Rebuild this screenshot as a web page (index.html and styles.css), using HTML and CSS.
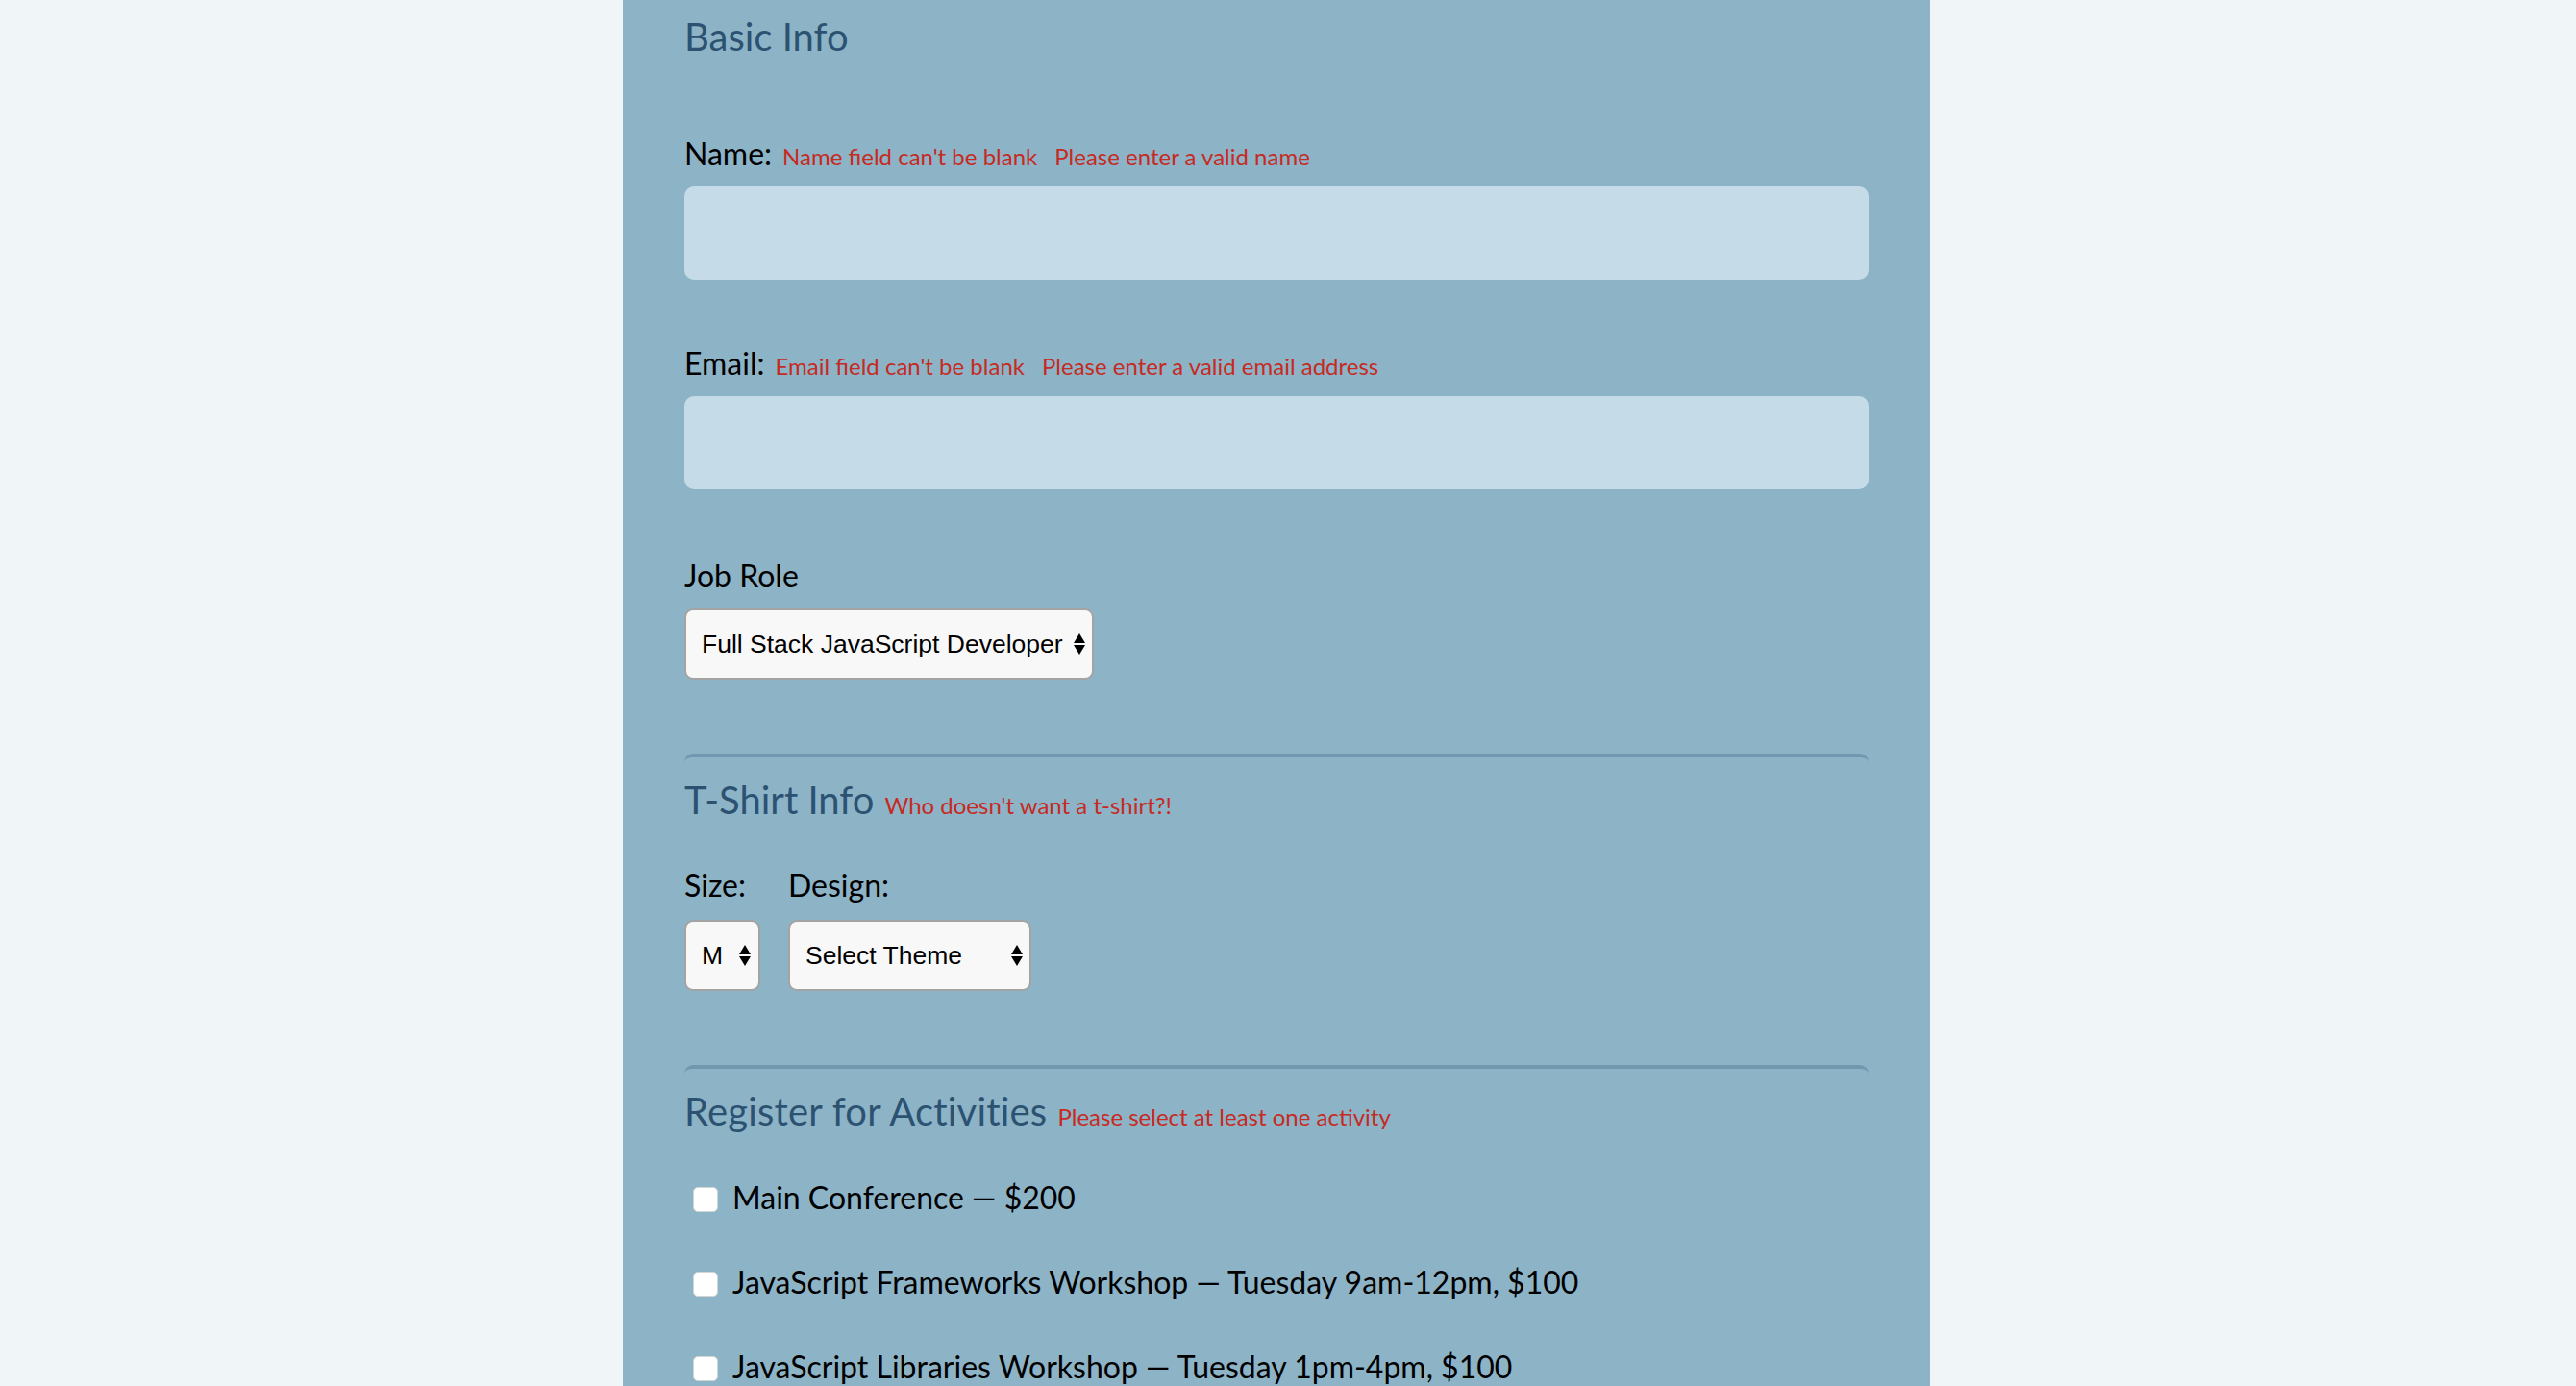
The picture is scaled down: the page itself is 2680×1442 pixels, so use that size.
FILE: index.html
```html
<!DOCTYPE html>
<html lang="en">
<head>
<meta charset="utf-8">
<title>Conference Registration</title>
<link rel="stylesheet" href="styles.css">
</head>
<body>
<form class="panel">
  <section class="group first">
    <h2 class="legend">Basic Info</h2>

    <div class="label-row name-row">
      <label for="name">Name:</label>
      <span class="err">Name field can't be blank</span>
      <span class="err err-gap">Please enter a valid name</span>
    </div>
    <input class="text-input" id="name" type="text">

    <div class="label-row">
      <label for="mail">Email:</label>
      <span class="err">Email field can't be blank</span>
      <span class="err err-gap">Please enter a valid email address</span>
    </div>
    <input class="text-input" id="mail" type="email">

    <div class="label-row job-row">
      <label for="title">Job Role</label>
    </div>
    <div class="select-wrap job-select">
      <select id="title" class="select">
        <option>Full Stack JavaScript Developer</option>
      </select>
      <svg class="arrows" width="12" height="22" viewBox="0 0 12 22"><path d="M6 0 L12 10 L0 10 Z M0 12 L12 12 L6 22 Z" fill="#000"/></svg>
    </div>
  </section>

  <section class="group ruled">
    <div class="legend-row">
      <h2 class="legend">T-Shirt Info</h2>
      <span class="err">Who doesn't want a t-shirt?!</span>
    </div>
    <div class="shirt-row">
      <div class="shirt-col">
        <div class="label-row"><label for="size">Size:</label></div>
        <div class="select-wrap size-select">
          <select id="size" class="select"><option>M</option></select>
          <svg class="arrows" width="12" height="22" viewBox="0 0 12 22"><path d="M6 0 L12 10 L0 10 Z M0 12 L12 12 L6 22 Z" fill="#000"/></svg>
        </div>
      </div>
      <div class="shirt-col">
        <div class="label-row"><label for="design">Design:</label></div>
        <div class="select-wrap design-select">
          <select id="design" class="select"><option>Select Theme</option></select>
          <svg class="arrows" width="12" height="22" viewBox="0 0 12 22"><path d="M6 0 L12 10 L0 10 Z M0 12 L12 12 L6 22 Z" fill="#000"/></svg>
        </div>
      </div>
    </div>
  </section>

  <section class="group ruled">
    <div class="legend-row">
      <h2 class="legend wide">Register for Activities</h2>
      <span class="err">Please select at least one activity</span>
    </div>
    <div class="activities">
      <label class="activity"><input type="checkbox" class="check"><span>Main Conference — $200</span></label>
      <label class="activity"><input type="checkbox" class="check"><span>JavaScript Frameworks Workshop — Tuesday 9am-12pm, $100</span></label>
      <label class="activity"><input type="checkbox" class="check"><span>JavaScript Libraries Workshop — Tuesday 1pm-4pm, $100</span></label>
    </div>
  </section>
</form>
</body>
</html>
```

FILE: styles.css
```css
html, body {
  margin: 0;
  padding: 0;
}

body {
  background: #f0f5f8;
  font-family: "Lato", "Open Sans", sans-serif;
  color: #000;
  height: 1442px;
  overflow: hidden;
}

.panel {
  width: 1360px;
  box-sizing: border-box;
  margin-left: 648px;
  background: #8db3c7;
  padding: 14px 64px 0;
  min-height: 1442px;
}

.group {
  margin: 0;
  padding: 0;
}

.ruled {
  margin-top: 77px;
  border-top: 4px solid #7198af;
  border-radius: 9px;
  padding-top: 20px;
}

.legend {
  margin: 0;
  font-size: 40px;
  font-weight: 400;
  line-height: 48px;
  color: #2c5272;
}

.legend.wide {
  letter-spacing: 0.2px;
}

.legend-row {
  display: flex;
  align-items: baseline;
  gap: 11px;
}

.err {
  font-size: 24px;
  color: #c62a22;
  line-height: 30px;
}

.err-gap {
  margin-left: 7px;
}

.label-row {
  display: flex;
  align-items: baseline;
  gap: 11px;
  font-size: 32px;
  line-height: 38px;
}

.label-row label {
  font-size: 32px;
}

.name-row {
  margin-top: 79px;
}

.job-row {
  position: relative;
  top: 3px;
}

.text-input {
  display: block;
  box-sizing: border-box;
  width: 100%;
  height: 97px;
  margin: 15px 0 68px;
  background: #c5dce8;
  border: 0;
  border-radius: 10px;
  outline: none;
}

.select-wrap {
  position: relative;
  margin-top: 18px;
}

.select {
  -webkit-appearance: none;
  appearance: none;
  display: block;
  box-sizing: border-box;
  height: 74px;
  background: #f8f8f8;
  border: 2px solid #a3a3a3;
  border-radius: 9px;
  font-family: "Liberation Sans", Arial, sans-serif;
  font-size: 26.5px;
  color: #000;
  padding: 0 30px 0 16px;
  margin: 0;
}

.arrows {
  position: absolute;
  top: 26px;
}

.job-select .select { width: 426px; }
.job-select .arrows { left: 405px; }

.shirt-row {
  display: flex;
  gap: 29px;
  margin-top: 46px;
}

.shirt-col .select-wrap {
  margin-top: 17px;
}

.size-select .select { width: 79px; }
.size-select .arrows { left: 57px; }

.design-select .select { width: 253px; }
.design-select .arrows { left: 232px; }

.activities {
  margin-top: 47px;
  display: flex;
  flex-direction: column;
  gap: 50px;
}

.activity {
  display: flex;
  align-items: center;
  font-size: 32px;
  line-height: 38px;
}

.check {
  -webkit-appearance: none;
  appearance: none;
  width: 26px;
  height: 26px;
  margin: 4px 15px 0 9px;
  background: #fff;
  border: 1px solid #d4d4d4;
  border-radius: 5px;
  flex: none;
}
```
